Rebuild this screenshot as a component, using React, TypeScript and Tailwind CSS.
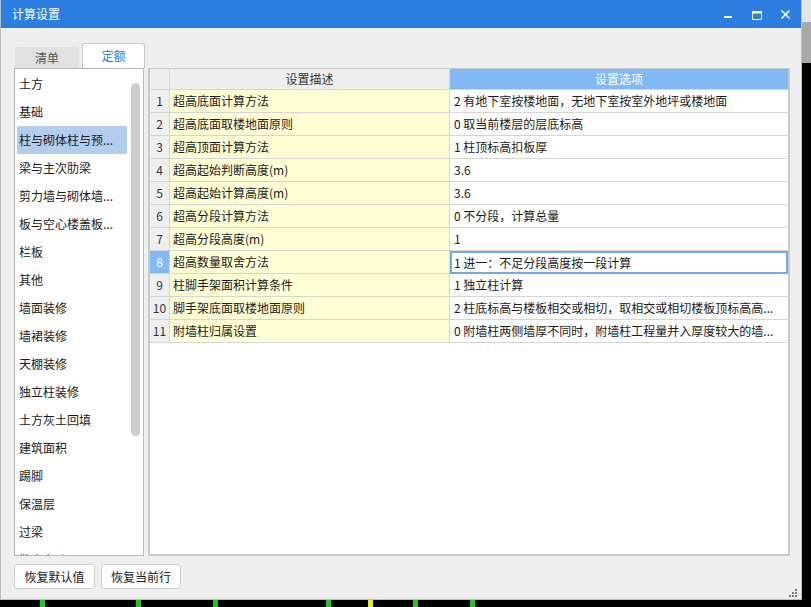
import { useState } from 'react';

const CATEGORIES = [
  '土方',
  '基础',
  '柱与砌体柱与预...',
  '梁与主次肋梁',
  '剪力墙与砌体墙...',
  '板与空心楼盖板...',
  '栏板',
  '其他',
  '墙面装修',
  '墙裙装修',
  '天棚装修',
  '独立柱装修',
  '土方灰土回填',
  '建筑面积',
  '踢脚',
  '保温层',
  '过梁',
  '散水台阶',
];

const ROWS: { desc: string; value: string }[] = [
  { desc: '超高底面计算方法', value: '2 有地下室按楼地面，无地下室按室外地坪或楼地面' },
  { desc: '超高底面取楼地面原则', value: '0 取当前楼层的层底标高' },
  { desc: '超高顶面计算方法', value: '1 柱顶标高扣板厚' },
  { desc: '超高起始判断高度(m)', value: '3.6' },
  { desc: '超高起始计算高度(m)', value: '3.6' },
  { desc: '超高分段计算方法', value: '0 不分段，计算总量' },
  { desc: '超高分段高度(m)', value: '1' },
  { desc: '超高数量取舍方法', value: '1 进一：不足分段高度按一段计算' },
  { desc: '柱脚手架面积计算条件', value: '1 独立柱计算' },
  { desc: '脚手架底面取楼地面原则', value: '2 柱底标高与楼板相交或相切，取相交或相切楼板顶标高高...' },
  { desc: '附墙柱归属设置', value: '0 附墙柱两侧墙厚不同时，附墙柱工程量并入厚度较大的墙...' },
];

function TitleBar() {
  return (
    <div className="flex h-[28px] shrink-0 items-center bg-[#2c7fe0] pl-[11px] text-[12px] text-white">
      <span className="flex-1 leading-none">计算设置</span>
      <div className="flex items-center">
        <svg width="29" height="28" viewBox="0 0 29 28">
          <rect x="10" y="16" width="8" height="2" fill="#fff" />
        </svg>
        <svg width="29" height="28" viewBox="0 0 29 28">
          <rect x="9.5" y="11.5" width="9" height="8" fill="none" stroke="#fff" strokeWidth="1" />
          <rect x="9.5" y="11.5" width="9" height="2" fill="#fff" />
        </svg>
        <svg width="29" height="28" viewBox="0 0 29 28">
          <path d="M9.5 10.5 L17.5 18.5 M17.5 10.5 L9.5 18.5" stroke="#fff" strokeWidth="1.6" />
        </svg>
      </div>
    </div>
  );
}

function Tabs() {
  return (
    <div className="flex h-[25px] items-end gap-[3px] pl-[14px] text-[12px]">
      <div className="flex h-[21px] w-[64px] items-center justify-center rounded-t-[2px] bg-[#e1e1e1] text-[#555]">
        清单
      </div>
      <div className="flex h-[25px] w-[63px] items-center justify-center rounded-t-[3px] border border-b-0 border-[#c9c9c9] bg-white text-[#2c7fe0]">
        定额
      </div>
    </div>
  );
}

function CategoryList({ active }: { active: number }) {
  return (
    <div className="relative flex h-[488px] w-[130px] shrink-0 flex-col overflow-hidden border border-[#b9b9b9] bg-white pl-[2px] pt-[1px]">
      {CATEGORIES.map((c, i) => (
        <div
          key={c}
          className={
            'flex h-[28px] w-[110px] shrink-0 items-center pl-[2px] text-[12px] text-[#1a1a1a] ' +
            (i === active ? 'bg-[#b3cdee]' : '')
          }
        >
          {c}
        </div>
      ))}
      {/* scrollbar thumb */}
      <div className="absolute left-[116px] top-[14px] h-[353px] w-[9px] rounded-[5px] bg-[#cdcdcd]" />
    </div>
  );
}

function SettingsTable({ selected }: { selected: number }) {
  return (
    <div className="h-[488px] w-[642px] border-2 border-t border-[#c9c9c9] bg-white">
      <div className="flex h-[21px] text-[12px]">
        <div className="w-[20px] border-r border-b border-[#d5d5d5] bg-[#efefef]" />
        <div className="flex w-[280px] items-center justify-center border-r border-b border-[#d5d5d5] bg-[#efefef] text-[#333]">
          设置描述
        </div>
        <div className="flex w-[338px] items-center justify-center border-b border-[#d5d5d5] bg-[#80b9f5] text-white">
          设置选项
        </div>
      </div>
      {ROWS.map((r, i) => {
        const sel = i === selected;
        return (
          <div key={i} className="flex h-[23px] text-[12px] text-[#1a1a1a]">
            <div
              className={
                'flex w-[20px] items-center justify-center border-r border-b border-[#d5d5d5] ' +
                (sel ? 'bg-[#80b9f5] text-white' : 'bg-[#efefef] text-[#333]')
              }
            >
              {i + 1}
            </div>
            <div className="flex w-[280px] items-center border-r border-b border-[#d5d5d5] bg-[#ffffd5] pl-[3px]">
              {r.desc}
            </div>
            <div
              className={
                'flex w-[338px] items-center whitespace-nowrap ' +
                (sel ? 'border-2 border-[#72a9e9] pl-[2px]' : 'border-b border-[#d5d5d5] pl-[4px]')
              }
            >
              {r.value}
            </div>
          </div>
        );
      })}
    </div>
  );
}

function ResizeGrip() {
  const dots = [
    [6, 0],
    [3, 3],
    [6, 3],
    [0, 6],
    [3, 6],
    [6, 6],
  ];
  return (
    <svg width="8" height="8" viewBox="0 0 8 8">
      {dots.map(([x, y], i) => (
        <rect key={i} x={x} y={y} width="2" height="2" fill="#7b7b7b" />
      ))}
    </svg>
  );
}

function Desktop() {
  const marks = [40, 136, 213, 326, 368, 413, 470];
  return (
    <div className="relative h-[7px] w-full bg-black">
      {marks.map((x, i) => (
        <div
          key={i}
          className={'absolute top-0 h-[7px] w-[5px] ' + (i === 4 ? 'bg-[#e6e62a]' : 'bg-[#27c227]')}
          style={{ left: x }}
        />
      ))}
    </div>
  );
}

export default function App() {
  const [activeCat] = useState(2);
  const [selectedRow] = useState(7);

  return (
    <div className="flex h-[607px] w-[811px] flex-col overflow-hidden bg-black font-['Noto_Sans_CJK_SC',sans-serif]">
      <div className="flex h-[600px]">
        <div className="flex h-[600px] w-[802px] flex-col border-r border-b border-l border-[#b8bcc4] bg-[#efefef]">
          <TitleBar />
          <div className="flex flex-1 flex-col pt-[15px]">
            <Tabs />
            <div className="flex gap-[4px] pl-[13px]">
              <CategoryList active={activeCat} />
              <SettingsTable selected={selectedRow} />
            </div>
            <div className="flex gap-[6px] pl-[13px] pt-[8px] text-[12px] text-[#1a1a1a]">
              <button className="h-[25px] w-[81px] rounded-[3px] border border-[#d0d0d0] bg-white">恢复默认值</button>
              <button className="h-[25px] w-[80px] rounded-[3px] border border-[#d0d0d0] bg-white">恢复当前行</button>
            </div>
            <div className="mt-auto flex justify-end pb-[2px] pr-[4px]">
              <ResizeGrip />
            </div>
          </div>
        </div>
        <div className="flex w-[9px] flex-col">
          <div className="h-[22px] bg-[#e4e4e4]" />
          <div className="h-[41px] bg-[#a9a9a9]" />
          <div className="flex-1 bg-black" />
        </div>
      </div>
      <Desktop />
    </div>
  );
}
